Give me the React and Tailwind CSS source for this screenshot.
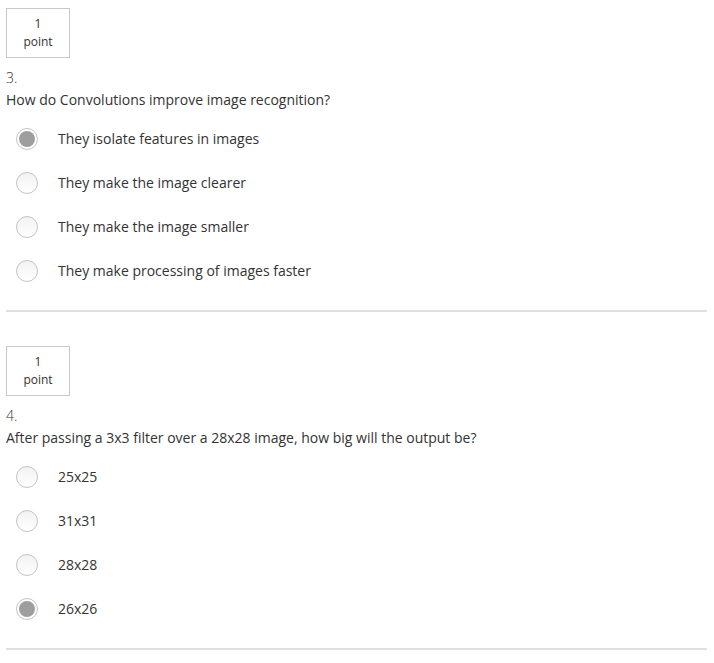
import React from 'react';

const questions = [
    {
        num: 3,
        text: 'How do Convolutions improve image recognition?',
        options: [
            'They isolate features in images',
            'They make the image clearer',
            'They make the image smaller',
            'They make processing of images faster',
        ],
        selected: 0,
    },
    {
        num: 4,
        text: 'After passing a 3x3 filter over a 28x28 image, how big will the output be?',
        options: ['25x25', '31x31', '28x28', '26x26'],
        selected: 3,
    },
];

function Radio({ checked }) {
    return (
        <span
            className={`w-[22px] h-[22px] rounded-full border border-[#c4c4c4] flex items-center justify-center shrink-0 ${
                checked ? 'bg-white' : 'bg-gradient-to-b from-[#f2f2f2] to-white'
            }`}
        >
            {checked && <span className="w-[16px] h-[16px] rounded-full bg-[#9e9e9e]" />}
        </span>
    );
}

function Question({ q }) {
    return (
        <div className="pr-[7px]">
            <div className="w-[64px] h-[50px] border border-[#c8c8c8] flex flex-col items-center justify-center pb-[1px] text-[12px] leading-[18px] text-[#333]">
                <span>1</span>
                <span>point</span>
            </div>
            <div className="mt-[9px] text-[14px] leading-[22px] text-[#333]">
                <div className="font-light">{q.num}.</div>
                <div>{q.text}</div>
            </div>
            <div className="mt-[6px]">
                {q.options.map((opt, i) => (
                    <label key={opt} className="h-[44px] flex items-center pl-[10px] gap-[20px] text-[14px] text-[#333]">
                        <Radio checked={i === q.selected} />
                        <span className="leading-[20px] pb-[1px]">{opt}</span>
                    </label>
                ))}
            </div>
            <div className="mt-[17px] h-[2px] bg-[#e0e0e0]" />
        </div>
    );
}

export default function App() {
    return (
        <div className="min-h-screen bg-white pl-[6px] pt-[8px] font-['Open_Sans',sans-serif]">
            <Question q={questions[0]} />
            <div className="h-[34px]" />
            <Question q={questions[1]} />
        </div>
    );
}
